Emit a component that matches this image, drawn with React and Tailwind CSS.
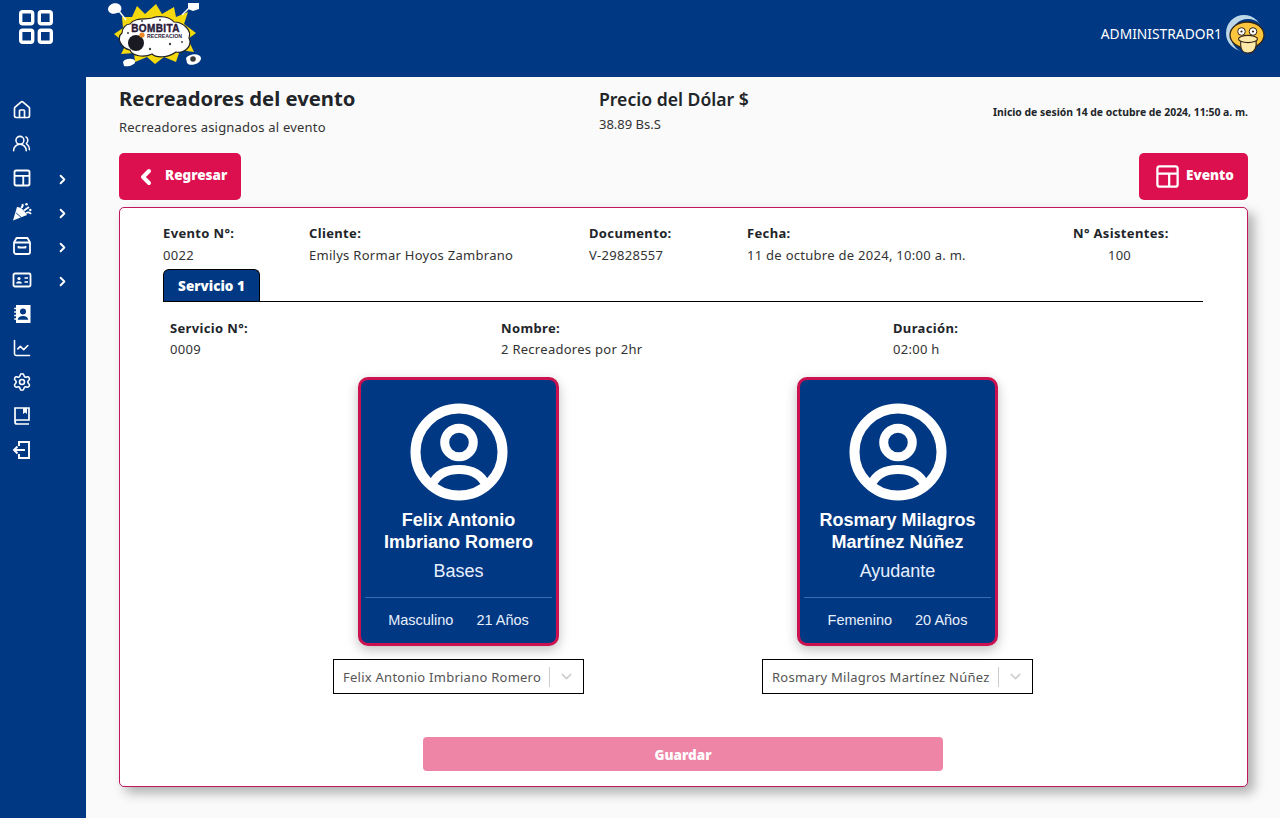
import React from 'react';
import { Home, UsersRound, ChevronRight, ChevronLeft, ChevronDown, LineChart, Settings } from 'lucide-react';

const Logo = () => (
  <svg width="96" height="68" viewBox="0 0 96 68" className="block">
    <polygon fill="#f5d90f" points="14,17 24,17 29,6 37,14 48,4 54,14 66,7 68,17 80,12 76,24 88,33 80,39 86,52 72,50 68,62 56,57 47,64 39,57 27,62 26,53 13,54 18,44 6,34 15,28" />
    <path fill="#fff" stroke="#222" strokeWidth="1.2" d="M22 24 C27 17 38 20 44 18 C52 15 62 17 66 22 C75 22 84 30 81 38 C85 46 76 54 68 52 C60 58 48 58 44 54 C36 58 24 56 22 50 C13 48 8 38 14 33 C14 28 18 24 22 24Z" />
    <g fill="#444">
      <circle cx="20" cy="33" r="1.1" /><circle cx="62" cy="44" r="1.2" /><circle cx="42" cy="49" r="1.2" /><circle cx="74" cy="42" r="1" /><circle cx="52" cy="20" r="1" /><circle cx="34" cy="21" r="1" />
    </g>
    <text x="47.5" y="32" textAnchor="middle" fontSize="10" fontWeight="900" fill="#2b1a3a" stroke="#2b1a3a" strokeWidth="0.4" fontFamily="'Liberation Sans', sans-serif" letterSpacing="0.4">BOMBITA</text>
    <text x="56.5" y="38" textAnchor="middle" fontSize="5.2" fontWeight="900" fill="#2b1a3a" fontFamily="'Liberation Sans', sans-serif">RECREACION</text>
    <circle cx="28" cy="43" r="8" fill="#1a1a22" />
    <circle cx="34" cy="35" r="2.6" fill="#f08a24" />
    <path fill="#fff" d="M0 9 C1 3 9 2 12 5 C15 8 13 13 9 13 C5 15 0 13 0 9Z" />
    <path stroke="#fff" strokeWidth="1.4" d="M11 11 L18 20" />
    <path fill="#fff" d="M80 3 H91 V9 L85 11 L80 9Z" />
    <path stroke="#fff" strokeWidth="1.4" d="M81 8 L74 15" />
    <path fill="#fff" d="M15 62 C17 58 26 58 27 61 C28 65 20 67 16 66Z" />
    <path fill="#fff" d="M78 58 C82 53 92 53 93 58 C93 64 82 67 79 63Z" />
    <circle cx="85" cy="59" r="2.8" fill="#3a3a3a" />
  </svg>
);

const Duck = () => (
  <svg width="42" height="40" viewBox="0 0 42 40" className="block ml-[3px]">
    <circle cx="19" cy="18" r="18" fill="#bcd8e8" />
    <circle cx="23" cy="21" r="17" fill="#003883" />
    <ellipse cx="22" cy="20" rx="17" ry="13" fill="#fbc53e" stroke="#33261a" strokeWidth="1.3" />
    <path fill="#ffe9a8" stroke="#33261a" strokeWidth="1.1" d="M16 25 C15 32 16 38 23 38 C30 38 32 32 31 25Z" />
    <ellipse cx="23" cy="24" rx="9.5" ry="3.6" fill="#ffe9a8" stroke="#33261a" strokeWidth="1.1" />
    <circle cx="16.5" cy="16.5" r="3.8" fill="#fff" stroke="#33261a" strokeWidth="1" />
    <circle cx="28" cy="16.5" r="3.8" fill="#fff" stroke="#33261a" strokeWidth="1" />
    <circle cx="16.5" cy="16.5" r="1.1" fill="#33261a" />
    <circle cx="28" cy="16.5" r="1.1" fill="#33261a" />
  </svg>
);

const GridIcon = () => (
  <svg width="34" height="34" viewBox="0 0 34 34" fill="none" stroke="white" strokeWidth="3.4">
    <rect x="1.7" y="1.7" width="12" height="12" rx="2" />
    <rect x="20.3" y="1.7" width="12" height="12" rx="2" />
    <rect x="1.7" y="20.3" width="12" height="12" rx="2" />
    <rect x="20.3" y="20.3" width="12" height="12" rx="2" />
  </svg>
);

const LayoutIcon = ({ size = 20, width = 2.2 }) => (
  <svg width={size} height={size} viewBox="0 0 24 24" fill="none" stroke="white" strokeWidth={width} strokeLinejoin="round">
    <rect x="3" y="3" width="18" height="18" rx="2" />
    <path d="M3 9.5 H21 M13.5 9.5 V21" />
  </svg>
);

const PartyIcon = () => (
  <svg width="20" height="20" viewBox="0 0 20 20" fill="white">
    <path d="M1 18.5 L5 5 C8 4.5 13 9 15 13Z" />
    <path d="M4.2 11 L10 16" stroke="#003883" strokeWidth="0.9" />
    <path d="M9 6 C10.5 5 11 3.5 10.5 2 M12 8.5 L17 5 M14 11 C16 10 18 10.5 19 12" stroke="white" strokeWidth="1.9" fill="none" />
    <circle cx="14.5" cy="2.2" r="1.3" />
    <circle cx="18.3" cy="8" r="1.2" />
  </svg>
);

const ArchiveIcon = () => (
  <svg width="20" height="20" viewBox="0 0 20 20" fill="none" stroke="white" strokeWidth="1.8" strokeLinejoin="round">
    <path d="M4.5 2 H15.5 L18 6.5 V16 C18 17 17 18 16 18 H4 C3 18 2 17 2 16 V6.5Z" />
    <path d="M2 6.5 H18 M6.5 10 V11.5 H13.5 V10" />
  </svg>
);

const IdIcon = () => (
  <svg width="20" height="20" viewBox="0 0 20 20" fill="none" stroke="white" strokeWidth="1.8">
    <rect x="1.5" y="3.5" width="17" height="13" rx="1.5" />
    <circle cx="7" cy="8.5" r="1.6" fill="white" stroke="none" />
    <path d="M4 13.5 C4.5 10.5 9.5 10.5 10 13.5Z" fill="white" stroke="none" />
    <path d="M12.5 8 H16 M12.5 12 H16" strokeWidth="1.6" />
  </svg>
);

const ContactIcon = () => (
  <svg width="20" height="20" viewBox="0 0 20 20" fill="white">
    <path fillRule="evenodd" d="M4 1 H18.5 V19 H4 Z M11 4.5 A3 3 0 1 0 11 10.5 A3 3 0 1 0 11 4.5 Z M5.8 15.8 H16.2 C16.2 10.6 5.8 10.6 5.8 15.8 Z" />
    <path d="M2.2 4.5 H5 M2.2 8 H5 M2.2 11.5 H5 M2.2 15 H5" stroke="white" strokeWidth="1.4" />
  </svg>
);

const BookIcon = () => (
  <svg width="20" height="20" viewBox="0 0 20 20" fill="none" stroke="white" strokeWidth="1.7">
    <path d="M3 16 V2 H17 V14 H5 C3.8 14 3 14.8 3 16 C3 17.2 3.8 18 5 18 H17" />
    <path d="M11 2 H15 V8 L13 6.5 L11 8Z" fill="white" stroke="none" />
  </svg>
);

const ExitIcon = () => (
  <svg width="20" height="20" viewBox="0 0 20 20" fill="none" stroke="white" strokeWidth="1.9">
    <path d="M7 6 V2 H17 V18 H7 V14" />
    <path d="M13 10 H2 M5.5 6.5 L2 10 L5.5 13.5" />
  </svg>
);

const menu = [
  { icon: <Home size={20} strokeWidth={2} /> },
  { icon: <UsersRound size={19} strokeWidth={1.9} /> },
  { icon: <LayoutIcon />, more: true },
  { icon: <PartyIcon />, more: true },
  { icon: <ArchiveIcon />, more: true },
  { icon: <IdIcon />, more: true },
  { icon: <ContactIcon /> },
  { icon: <LineChart size={20} strokeWidth={1.9} /> },
  { icon: <Settings size={20} strokeWidth={1.9} /> },
  { icon: <BookIcon /> },
  { icon: <ExitIcon /> },
];

const Field = ({ label, value, className, gap = 'mt-[2px]' }) => (
  <div className={className}>
    <p className="text-[13px] leading-[20px] font-bold tracking-[0.35px] text-[#212529]">{label}</p>
    <p className={`text-[13px] leading-[20px] ${gap} text-[#333] tracking-[0.28px]`}>{value}</p>
  </div>
);

const Recreador = ({ first, second, role, gender, age, selected, selectWidth }) => (
  <div className="w-[439px] flex flex-col items-center">
    <div className="w-[201px] h-[269px] bg-[#003883] border-[3px] border-[#cb1150] rounded-[10px] shadow-[0_4px_12px_rgba(0,0,0,0.25)] text-white flex flex-col items-center font-['Liberation_Sans',sans-serif]">
      <svg width="98" height="98" viewBox="0 0 98 98" fill="none" stroke="white" className="mt-[23px] shrink-0">
        <circle cx="49" cy="49" r="43.5" strokeWidth="10" />
        <circle cx="49" cy="39.5" r="14.3" strokeWidth="9" />
        <path d="M22 82 C27 71 37 66.5 49 66.5 C61 66.5 71 71 76 82" strokeWidth="9" />
      </svg>
      <p className="mt-[8px] text-[18px] leading-[22px] font-bold text-center">{first}<br />{second}</p>
      <p className="mt-[7px] text-[18px] leading-[22px] text-[#e8f0ff]">{role}</p>
      <div className="w-[187px] h-px bg-[#3a6cb0] mt-[15px]" />
      <div className="flex gap-[23px] mt-[12px] text-[14.5px] leading-[20px] text-[#e8f0ff]">
        <span>{gender}</span>
        <span>{age}</span>
      </div>
    </div>
    <div className={`${selectWidth} h-[35px] mt-[13px] border border-black bg-white flex items-center pl-[9px] text-[13px] text-[#555] tracking-[0.25px]`}>
      <span className="flex-1 whitespace-nowrap pt-[2px]">{selected}</span>
      <span className="w-px h-[20px] bg-[#ccc]" />
      <ChevronDown size={17} strokeWidth={2} className="text-[#ccc] mx-[8px]" />
    </div>
  </div>
);

export default function App() {
  return (
    <div className="h-[818px] overflow-hidden flex flex-col bg-[#fafafa] font-['Noto_Sans',sans-serif]">
      <header className="h-[77px] shrink-0 bg-[#003883] flex items-start">
        <div className="w-[108px] shrink-0 pl-[19px] pt-[10px]">
          <GridIcon />
        </div>
        <Logo />
        <div className="ml-auto flex items-center pr-[13px] pt-[15px] text-white text-[13.8px]">
          <span className="mb-[2px]">ADMINISTRADOR1</span>
          <Duck />
        </div>
      </header>
      <div className="flex flex-1 min-h-0">
        <aside className="w-[86px] shrink-0 bg-[#003883] pt-[16px] text-white flex flex-col">
          {menu.map((item, i) => (
            <div key={i} className="h-[34px] flex items-center pl-[12px]">
              <span className="w-[20px] h-[20px]">{item.icon}</span>
              {item.more && <ChevronRight size={15} strokeWidth={3} className="ml-[23px] mt-[2px]" />}
            </div>
          ))}
        </aside>
        <main className="flex-1 pl-[33px] pr-[32px]">
          <div className="flex h-[76px] pt-[7px]">
            <div className="w-[480px]">
              <h1 className="text-[20.25px] leading-[28px] font-bold text-[#212529]">Recreadores del evento</h1>
              <p className="text-[13px] leading-[20px] mt-[5px] text-[#333] tracking-[0.2px]">Recreadores asignados al evento</p>
            </div>
            <div className="pt-[1px]">
              <h2 className="text-[17.6px] leading-[28px] font-semibold text-[#212529]">Precio del Dólar $</h2>
              <p className="text-[13px] leading-[20px] mt-[1px] text-[#333]">38.89 Bs.S</p>
            </div>
            <p className="ml-auto text-[10.4px] leading-[16px] font-bold text-[#212529] mt-[20px]">Inicio de sesión 14 de octubre de 2024, 11:50 a. m.</p>
          </div>
          <div className="flex justify-between">
            <button className="w-[122px] h-[47px] bg-[#dc0f4f] rounded-[5px] text-white text-[13.5px] font-black flex items-center pl-[15px]">
              <ChevronLeft size={24} strokeWidth={4} />
              <span className="ml-[7px] mb-[2px]">Regresar</span>
            </button>
            <button className="w-[109px] h-[47px] bg-[#dc0f4f] rounded-[5px] text-white text-[13.5px] font-black flex items-center pl-[15px]">
              <LayoutIcon size={27} width={2} />
              <span className="ml-[5px] mb-[2px]">Evento</span>
            </button>
          </div>
          <section className="mt-[7px] h-[580px] bg-white border border-[#c0185c] rounded-[5px] shadow-[6px_6px_12px_rgba(0,0,0,0.3)] pl-[43px] pr-[44px] pt-[15px]">
            <div className="flex h-[46px]">
              <Field label="Evento N°:" value="0022" className="w-[146px]" />
              <Field label="Cliente:" value="Emilys Rormar Hoyos Zambrano" className="w-[280px]" />
              <Field label="Documento:" value="V-29828557" className="w-[158px]" />
              <Field label="Fecha:" value="11 de octubre de 2024, 10:00 a. m." className="w-[326px]" />
              <Field label="N° Asistentes:" value="100" className="text-center w-[93px] whitespace-nowrap" />
            </div>
            <div className="h-[33px] border-b border-black flex items-end">
              <div className="w-[97px] h-[32px] pt-[2px] bg-[#003883] border border-black border-b-0 rounded-t-[6px] text-white text-[13.5px] font-black flex items-center justify-center">Servicio 1</div>
            </div>
            <div className="flex pl-[7px] mt-[16px] h-[46px]">
              <Field label="Servicio N°:" value="0009" gap="mt-[1px]" className="w-[331px]" />
              <Field label="Nombre:" value="2 Recreadores por 2hr" gap="mt-[1px]" className="w-[392px]" />
              <Field label="Duración:" value="02:00 h" gap="mt-[1px]" />
            </div>
            <div className="flex pl-[76px] mt-[13px]">
              <Recreador first="Felix Antonio" second="Imbriano Romero" role="Bases" gender="Masculino" age="21 Años" selected="Felix Antonio Imbriano Romero" selectWidth="w-[251px]" />
              <Recreador first="Rosmary Milagros" second="Martínez Núñez" role="Ayudante" gender="Femenino" age="20 Años" selected="Rosmary Milagros Martínez Núñez" selectWidth="w-[271px]" />
            </div>
            <button className="block mx-auto mt-[43px] pt-[2px] w-[520px] h-[34px] bg-[#ee84a6] rounded-[4px] text-white text-[13.5px] font-black">Guardar</button>
          </section>
        </main>
      </div>
    </div>
  );
}
